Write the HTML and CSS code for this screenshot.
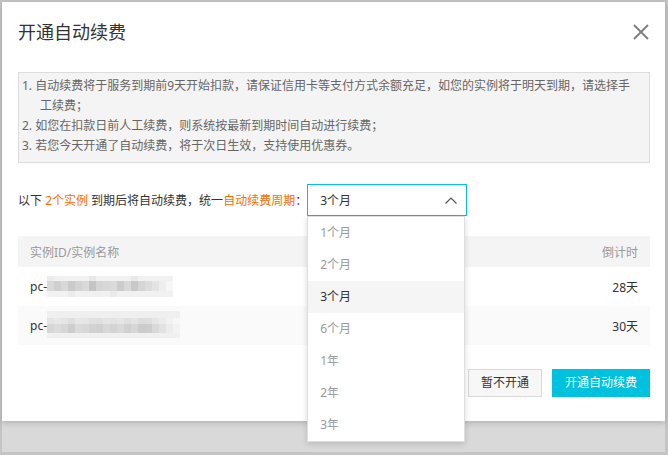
FILE: index.html
```html
<!DOCTYPE html>
<html lang="zh-CN">
<head>
<meta charset="utf-8">
<title>开通自动续费</title>
<link rel="stylesheet" href="styles.css">
</head>
<body>
<div class="frame">
  <div class="dialog">
    <div class="title">开通自动续费</div>
    <button class="close" aria-label="关闭">
      <svg width="16" height="16" viewBox="0 0 16 16"><path d="M1 1L15 15M15 1L1 15" stroke="#7c7c7c" stroke-width="1.8" fill="none"/></svg>
    </button>
    <div class="notice">
      <p>1. 自动续费将于服务到期前9天开始扣款，请保证信用卡等支付方式余额充足，如您的实例将于明天到期，请选择手工续费；</p>
      <p>2. 如您在扣款日前人工续费，则系统按最新到期时间自动进行续费；</p>
      <p>3. 若您今天开通了自动续费，将于次日生效，支持使用优惠券。</p>
    </div>
    <div class="prompt">
      <span>以下 <em>2个实例</em> 到期后将自动续费，统一<em>自动续费周期</em>：</span>
      <div class="select">
        <div class="select-box">
          <span>3个月</span>
          <svg width="12" height="7" viewBox="0 0 12 7"><polyline points="0.5,6.5 6,1 11.5,6.5" fill="none" stroke="#555" stroke-width="1.2"/></svg>
        </div>
        <ul class="menu">
          <li>1个月</li>
          <li>2个月</li>
          <li class="active">3个月</li>
          <li>6个月</li>
          <li>1年</li>
          <li>2年</li>
          <li>3年</li>
        </ul>
      </div>
    </div>
    <div class="table">
      <div class="row head"><span>实例ID/实例名称</span><span>倒计时</span></div>
      <div class="row">
        <span class="id">pc-<svg class="blur" width="126" height="22" viewBox="0 0 126 22">
          <g>
            <rect x="0" y="0" width="126" height="5" fill="#f1f1f1"/>
            <rect x="0" y="15" width="126" height="6" fill="#f1f1f1"/>
            <rect x="0" y="5" width="7" height="10" fill="#d9d9d9"/>
            <rect x="7" y="5" width="7" height="10" fill="#cfcfcf"/>
            <rect x="14" y="5" width="7" height="10" fill="#d8d8d8"/>
            <rect x="21" y="5" width="7" height="10" fill="#cacaca"/>
            <rect x="28" y="5" width="7" height="10" fill="#d3d3d3"/>
            <rect x="35" y="5" width="7" height="10" fill="#d9d9d9"/>
            <rect x="42" y="5" width="7" height="10" fill="#c4c4c4"/>
            <rect x="49" y="5" width="7" height="10" fill="#d5d5d5"/>
            <rect x="56" y="5" width="7" height="10" fill="#d8d8d8"/>
            <rect x="63" y="5" width="7" height="10" fill="#dadada"/>
            <rect x="70" y="5" width="7" height="10" fill="#cccccc"/>
            <rect x="77" y="5" width="7" height="10" fill="#d8d8d8"/>
            <rect x="84" y="5" width="7" height="10" fill="#c8c8c8"/>
            <rect x="91" y="5" width="7" height="10" fill="#d5d5d5"/>
            <rect x="98" y="5" width="7" height="10" fill="#dcdcdc"/>
            <rect x="105" y="5" width="7" height="10" fill="#e4e4e4"/>
            <rect x="112" y="5" width="7" height="10" fill="#eeeeee"/>
            <rect x="119" y="5" width="7" height="10" fill="#f6f6f6"/>
            <rect x="0" y="0" width="7" height="5" fill="#ececec"/>
            <rect x="42" y="0" width="7" height="5" fill="#e8e8e8"/>
            <rect x="84" y="0" width="7" height="5" fill="#e9e9e9"/>
            <rect x="21" y="15" width="7" height="6" fill="#ebebeb"/>
            <rect x="63" y="15" width="7" height="6" fill="#eaeaea"/>
          </g>
        </svg></span>
        <span>28天</span>
      </div>
      <div class="row alt">
        <span class="id">pc-<svg class="blur" width="133" height="30" viewBox="0 0 133 30">
          <g>
            <rect x="0" y="0" width="133" height="7" fill="#efefef"/>
            <rect x="0" y="22" width="133" height="5" fill="#f0f0f0"/>
            <rect x="0" y="7" width="7" height="15" fill="#d6d6d6"/>
            <rect x="7" y="7" width="7" height="15" fill="#dcdcdc"/>
            <rect x="14" y="7" width="7" height="15" fill="#d7d7d7"/>
            <rect x="21" y="7" width="7" height="15" fill="#cdcdcd"/>
            <rect x="28" y="7" width="7" height="15" fill="#dadada"/>
            <rect x="35" y="7" width="7" height="15" fill="#d8d8d8"/>
            <rect x="42" y="7" width="7" height="15" fill="#d2d2d2"/>
            <rect x="49" y="7" width="7" height="15" fill="#d0d0d0"/>
            <rect x="56" y="7" width="7" height="15" fill="#d8d8d8"/>
            <rect x="63" y="7" width="7" height="15" fill="#d4d4d4"/>
            <rect x="70" y="7" width="7" height="15" fill="#d9d9d9"/>
            <rect x="77" y="7" width="7" height="15" fill="#d0d0d0"/>
            <rect x="84" y="7" width="7" height="15" fill="#d6d6d6"/>
            <rect x="91" y="7" width="7" height="15" fill="#cbcbcb"/>
            <rect x="98" y="7" width="7" height="15" fill="#cdcdcd"/>
            <rect x="105" y="7" width="7" height="15" fill="#d9d9d9"/>
            <rect x="112" y="7" width="7" height="15" fill="#e2e2e2"/>
            <rect x="119" y="7" width="7" height="15" fill="#ececec"/>
            <rect x="126" y="7" width="7" height="15" fill="#f3f3f3"/>
            <rect x="0" y="7" width="133" height="6" fill="#ffffff" fill-opacity="0.35"/>
          </g>
        </svg></span>
        <span>30天</span>
      </div>
    </div>
    <div class="actions">
      <button class="btn">暂不开通</button>
      <button class="btn primary">开通自动续费</button>
    </div>
  </div>
</div>
</body>
</html>
```

FILE: styles.css
```css
* { box-sizing: border-box; }
html, body { margin: 0; padding: 0; }
body {
  font-family: "Noto Sans", "Noto Sans CJK SC", sans-serif;
  font-size: 12px;
  color: #333;
  background: #d9d9d9;
}
.frame {
  width: 668px;
  height: 455px;
  border-style: solid;
  border-color: #c4c4c4;
  border-width: 2px 3px 3px 2px;
  background: #d9d9d9;
}
.dialog {
  position: relative;
  height: 419px;
  background: #fff;
  padding: 18px 15px 0 16px;
  box-shadow: 0 2px 6px rgba(0, 0, 0, 0.18);
}
.title {
  font-size: 18px;
  line-height: 24px;
  color: #333;
  margin-bottom: 28px;
}
.close {
  position: absolute;
  top: 22px;
  right: 16px;
  width: 16px;
  height: 16px;
  padding: 0;
  border: 0;
  background: none;
}
.close svg { display: block; }
.notice {
  background: #f4f4f4;
  border: 1px solid #dcdcdc;
  padding: 3px 8px 6px 21px;
  color: #666;
  line-height: 20px;
}
.notice p {
  margin: 0;
  text-indent: -18px;
}
.prompt {
  display: flex;
  align-items: center;
  margin-top: 21px;
  height: 32px;
}
.prompt em {
  font-style: normal;
  color: #ff6a00;
}
.select {
  position: relative;
  width: 160px;
}
.select-box {
  display: flex;
  align-items: center;
  justify-content: space-between;
  height: 32px;
  border: 1px solid #00c1de;
  padding: 0 9px 0 12px;
  color: #333;
}
.select-box svg { display: block; margin-top: 1px; }
.menu {
  position: absolute;
  top: 100%;
  left: 0;
  width: 158px;
  margin: 0;
  padding: 0;
  list-style: none;
  background: #fff;
  border: 1px solid #dedede;
  box-shadow: 0 2px 6px rgba(0, 0, 0, 0.15);
  z-index: 2;
}
.menu li {
  height: 32px;
  line-height: 32px;
  padding-left: 12px;
  color: #999;
}
.menu li.active {
  background: #f5f5f5;
  color: #333;
}
.table {
  margin-top: 20px;
}
.row {
  display: flex;
  align-items: center;
  justify-content: space-between;
  height: 39px;
  padding: 0 12px;
  color: #333;
}
.row.head {
  height: 31px;
  background: #f4f4f4;
  color: #999;
}
.row.alt { background: #fafafa; }
.id {
  display: flex;
  align-items: center;
}
.blur { display: block; }
.actions {
  display: flex;
  justify-content: flex-end;
  gap: 10px;
  margin-top: 24px;
}
.btn {
  height: 28px;
  padding: 0 12px;
  border: 1px solid #d9d9d9;
  background: #f7f7f7;
  color: #333;
  font-family: inherit;
  font-size: 12px;
  line-height: 26px;
}
.btn.primary {
  background: #00c1de;
  border-color: #00c1de;
  color: #fff;
}
```
